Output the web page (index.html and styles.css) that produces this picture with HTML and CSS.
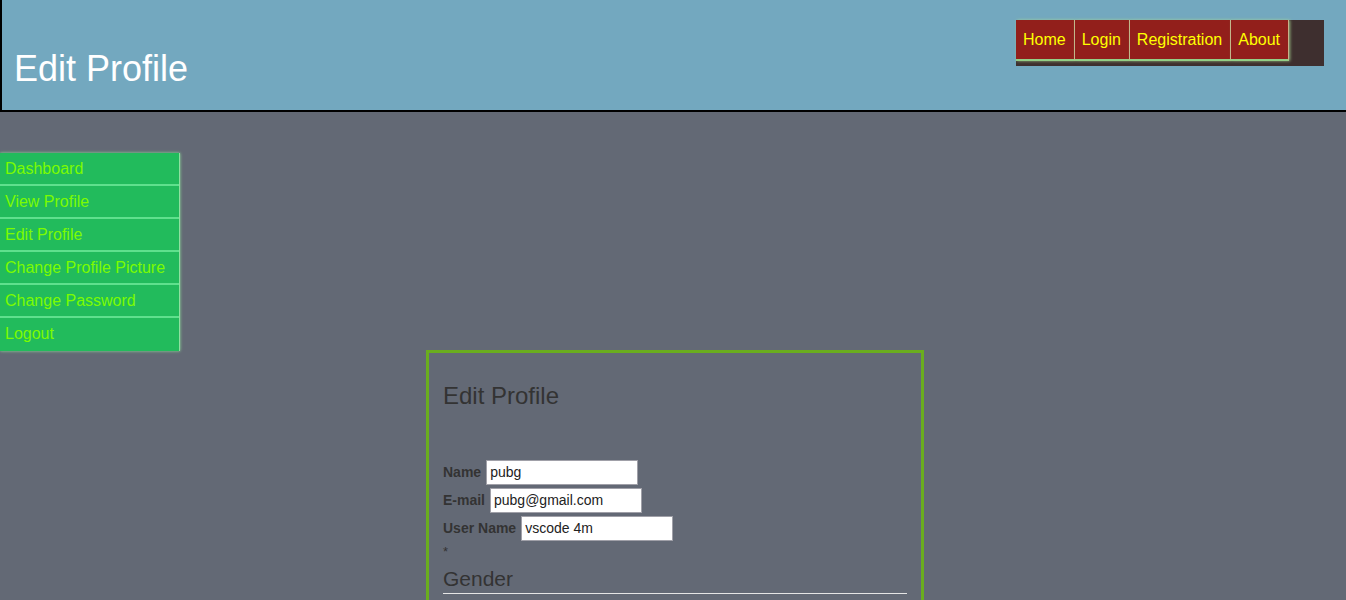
FILE: index.html
```html
<!DOCTYPE html>
<html>
<head>
<meta charset="utf-8">
<title>Edit Profile</title>
<link rel="stylesheet" href="styles.css">
</head>
<body>
<header class="header">
  <h1 class="title">Edit Profile</h1>
  <nav class="topnav">
    <a class="topnav-item" href="#">Home</a>
    <a class="topnav-item" href="#">Login</a>
    <a class="topnav-item" href="#">Registration</a>
    <a class="topnav-item" href="#">About</a>
  </nav>
</header>
<aside class="sidebar">
  <a class="side-item" href="#">Dashboard</a>
  <a class="side-item" href="#">View Profile</a>
  <a class="side-item" href="#">Edit Profile</a>
  <a class="side-item" href="#">Change Profile Picture</a>
  <a class="side-item" href="#">Change Password</a>
  <a class="side-item" href="#">Logout</a>
</aside>
<main class="panel">
  <h2 class="panel-title">Edit Profile</h2>
  <form class="form">
    <div class="row"><label class="lbl">Name</label><input class="inp" type="text" value="pubg"></div>
    <div class="row"><label class="lbl">E-mail</label><input class="inp" type="text" value="pubg@gmail.com"></div>
    <div class="row"><label class="lbl">User Name</label><input class="inp" type="text" value="vscode 4m"></div>
    <div class="star">*</div>
    <div class="legend">Gender</div>
  </form>
</main>
</body>
</html>
```
FILE: styles.css
```css
html, body {
  margin: 0;
  padding: 0;
}
body {
  background: #636975;
  font-family: "Liberation Sans", Arial, sans-serif;
  overflow: hidden;
}
.header {
  display: flex;
  justify-content: space-between;
  align-items: flex-start;
  background: #73a8bf;
  border-left: 2px solid #000;
  border-bottom: 2px solid #000;
  padding: 20px 22px 0 12px;
  box-sizing: content-box;
  height: 90px;
}
.title {
  margin: 31px 0 0 0;
  font-size: 36px;
  line-height: 36px;
  font-weight: normal;
  color: #fff;
}
.topnav {
  display: flex;
  width: 308px;
  height: 46px;
  background: #3e2f2f;
  box-sizing: border-box;
  align-items: flex-start;
}
.topnav-item {
  display: block;
  height: 41px;
  box-sizing: border-box;
  padding: 0 8px 0 7px;
  line-height: 39px;
  font-size: 16px;
  color: #ffff00;
  text-decoration: none;
  background: #921f1b;
  border-bottom: 2px solid #93cf86;
  border-right: 1px solid #c7b28a;
  box-shadow: 1px 0 3px rgba(170, 220, 150, 0.8);
}
.sidebar {
  display: flex;
  flex-direction: column;
  width: 180px;
  margin-top: 41px;
  margin-bottom: -1px;
  box-shadow: 0 0 3px rgba(150, 240, 160, 0.9);
  border-right: 1px solid #8fe0a0;
  box-sizing: border-box;
}
.side-item {
  display: block;
  height: 33px;
  box-sizing: border-box;
  padding: 0 5px;
  line-height: 32px;
  font-size: 16px;
  color: #7cfc00;
  text-decoration: none;
  background: #22bb5c;
  border-bottom: 2px solid #5fe08d;
}
.side-item:last-child {
  border-bottom: none;
}
.panel {
  width: 498px;
  margin: 0 0 0 calc(50% - 247px);
  border: 3px solid #6aad1e;
  border-bottom: none;
  box-sizing: border-box;
  padding: 15px 14px 0 14px;
  height: 260px;
}
.panel-title {
  margin: 14px 0 0 0;
  font-size: 24px;
  line-height: 28px;
  font-weight: normal;
  color: #333;
}
.form {
  margin-top: 50px;
  display: flex;
  flex-direction: column;
  gap: 4px;
}
.row {
  display: flex;
  align-items: center;
  gap: 5px;
  height: 24px;
}
.lbl {
  font-size: 14px;
  font-weight: bold;
  color: #333;
}
.inp {
  width: 152px;
  height: 25px;
  box-sizing: border-box;
  margin: 0;
  padding: 1px 3px;
  border: 1px solid #a0a0a8;
  font-family: "Liberation Sans", Arial, sans-serif;
  font-size: 14px;
  color: #222;
  background: #fff;
}
.star {
  font-size: 13px;
  color: #333;
  line-height: 14px;
  margin-top: 1px;
}
.legend {
  font-size: 21px;
  line-height: 24px;
  color: #333;
  padding-bottom: 2px;
  border-bottom: 1px solid #e5e5e5;
  margin-top: 4px;
}
```
